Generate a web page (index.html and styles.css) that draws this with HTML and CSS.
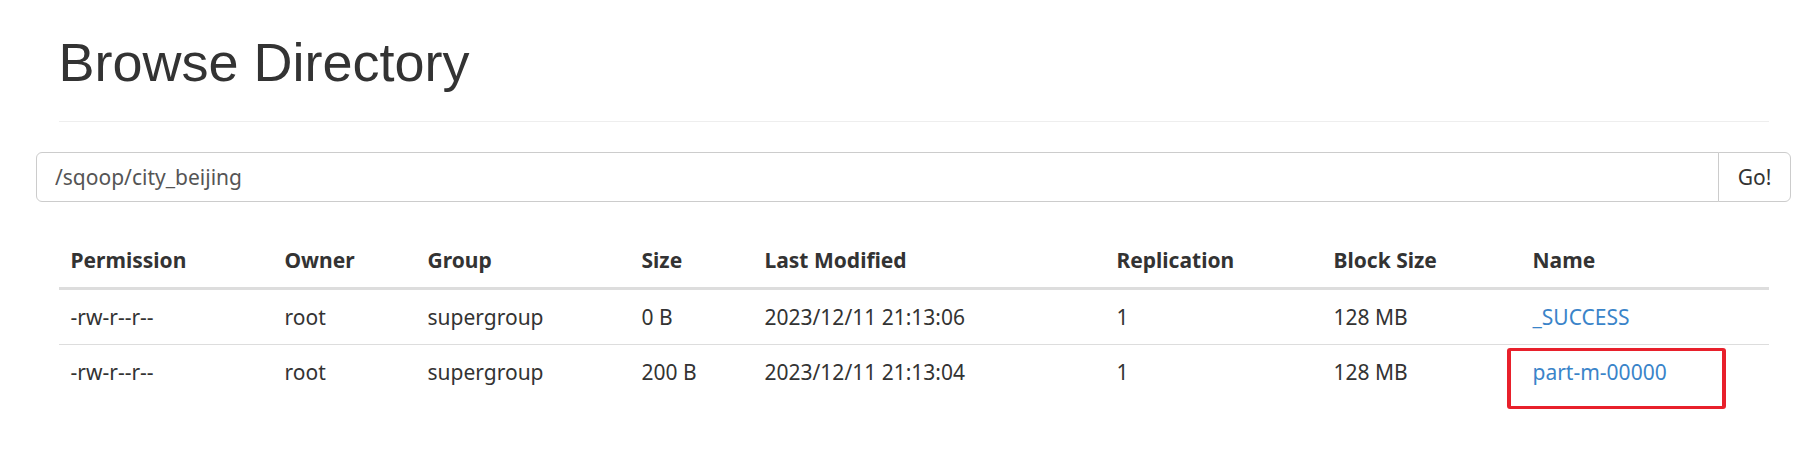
FILE: index.html
```html
<!DOCTYPE html>
<html>
<head>
<meta charset="utf-8">
<title>Browse Directory</title>
<link rel="stylesheet" href="styles.css">
</head>
<body>
<div class="container">
  <div class="page-header">
    <h1>Browse Directory</h1>
  </div>
  <div class="input-group">
    <input class="path-input" type="text" value="/sqoop/city_beijing">
    <button class="go-btn">Go!</button>
  </div>
  <table class="listing">
    <colgroup>
      <col class="c-perm"><col class="c-owner"><col class="c-group"><col class="c-size">
      <col class="c-mod"><col class="c-rep"><col class="c-block"><col class="c-name">
    </colgroup>
    <thead>
      <tr>
        <th>Permission</th><th>Owner</th><th>Group</th><th>Size</th>
        <th>Last Modified</th><th>Replication</th><th>Block Size</th><th>Name</th>
      </tr>
    </thead>
    <tbody>
      <tr>
        <td>-rw-r--r--</td><td>root</td><td>supergroup</td><td>0 B</td>
        <td>2023/12/11 21:13:06</td><td>1</td><td>128 MB</td>
        <td><a class="file-link" href="#">_SUCCESS</a></td>
      </tr>
      <tr>
        <td>-rw-r--r--</td><td>root</td><td>supergroup</td><td>200 B</td>
        <td>2023/12/11 21:13:04</td><td>1</td><td>128 MB</td>
        <td><a class="file-link" href="#">part-m-00000</a></td>
      </tr>
    </tbody>
  </table>
  <span class="highlight"></span>
</div>
</body>
</html>
```
FILE: styles.css
```css
html, body {
  margin: 0;
  padding: 0;
  background: #fff;
}
body {
  min-height: 457px;
  font-family: "Noto Sans", "Open Sans", sans-serif;
  font-size: 21px;
  color: #333;
}
.container {
  position: relative;
  margin-left: 36px;
  width: 1755px;
  padding-bottom: 40px;
}
.page-header {
  margin: 0 22.5px 30px;
  padding: 33px 0 29px;
  border-bottom: 1px solid #eee;
}
.page-header h1 {
  margin: 0;
  font-family: "Liberation Sans", Arial, sans-serif;
  font-weight: 400;
  font-size: 54px;
  line-height: 1.1;
  color: #333;
}
.input-group {
  display: flex;
  height: 50px;
}
.path-input {
  flex: 1;
  box-sizing: border-box;
  height: 50px;
  margin: 0;
  padding: 0 18px;
  border: 1px solid #ccc;
  border-radius: 6px 0 0 6px;
  font-family: "Noto Sans", "Open Sans", sans-serif;
  font-size: 21px;
  color: #555;
  background: #fff;
  outline: none;
}
.go-btn {
  box-sizing: border-box;
  width: 73px;
  height: 50px;
  margin: 0 0 0 -1px;
  padding: 0;
  border: 1px solid #ccc;
  border-radius: 0 6px 6px 0;
  background: #fff;
  font-family: "Noto Sans", "Open Sans", sans-serif;
  font-size: 21px;
  color: #333;
}
.listing {
  margin: 31px 22.5px 0;
  width: 1710px;
  table-layout: fixed;
  border-collapse: separate;
  border-spacing: 0;
}
.c-perm { width: 214px; }
.c-owner { width: 143px; }
.c-group { width: 214px; }
.c-size { width: 123px; }
.c-mod { width: 352px; }
.c-rep { width: 217px; }
.c-block { width: 199px; }
.c-name { width: 248px; }
.listing th,
.listing td {
  padding: 12px;
  line-height: 30px;
  text-align: left;
  white-space: nowrap;
}
.listing th {
  font-weight: 700;
  vertical-align: bottom;
  border-bottom: 3px solid #ddd;
}
.listing tbody tr + tr td {
  border-top: 1px solid #ddd;
}
.file-link {
  color: #3a84c9;
  text-decoration: none;
}
.highlight {
  position: absolute;
  left: 1471px;
  top: 348px;
  width: 219px;
  height: 61px;
  box-sizing: border-box;
  border: 3px solid #e8202b;
  border-left-width: 4px;
  border-right-width: 4px;
  border-radius: 3px;
}
```
